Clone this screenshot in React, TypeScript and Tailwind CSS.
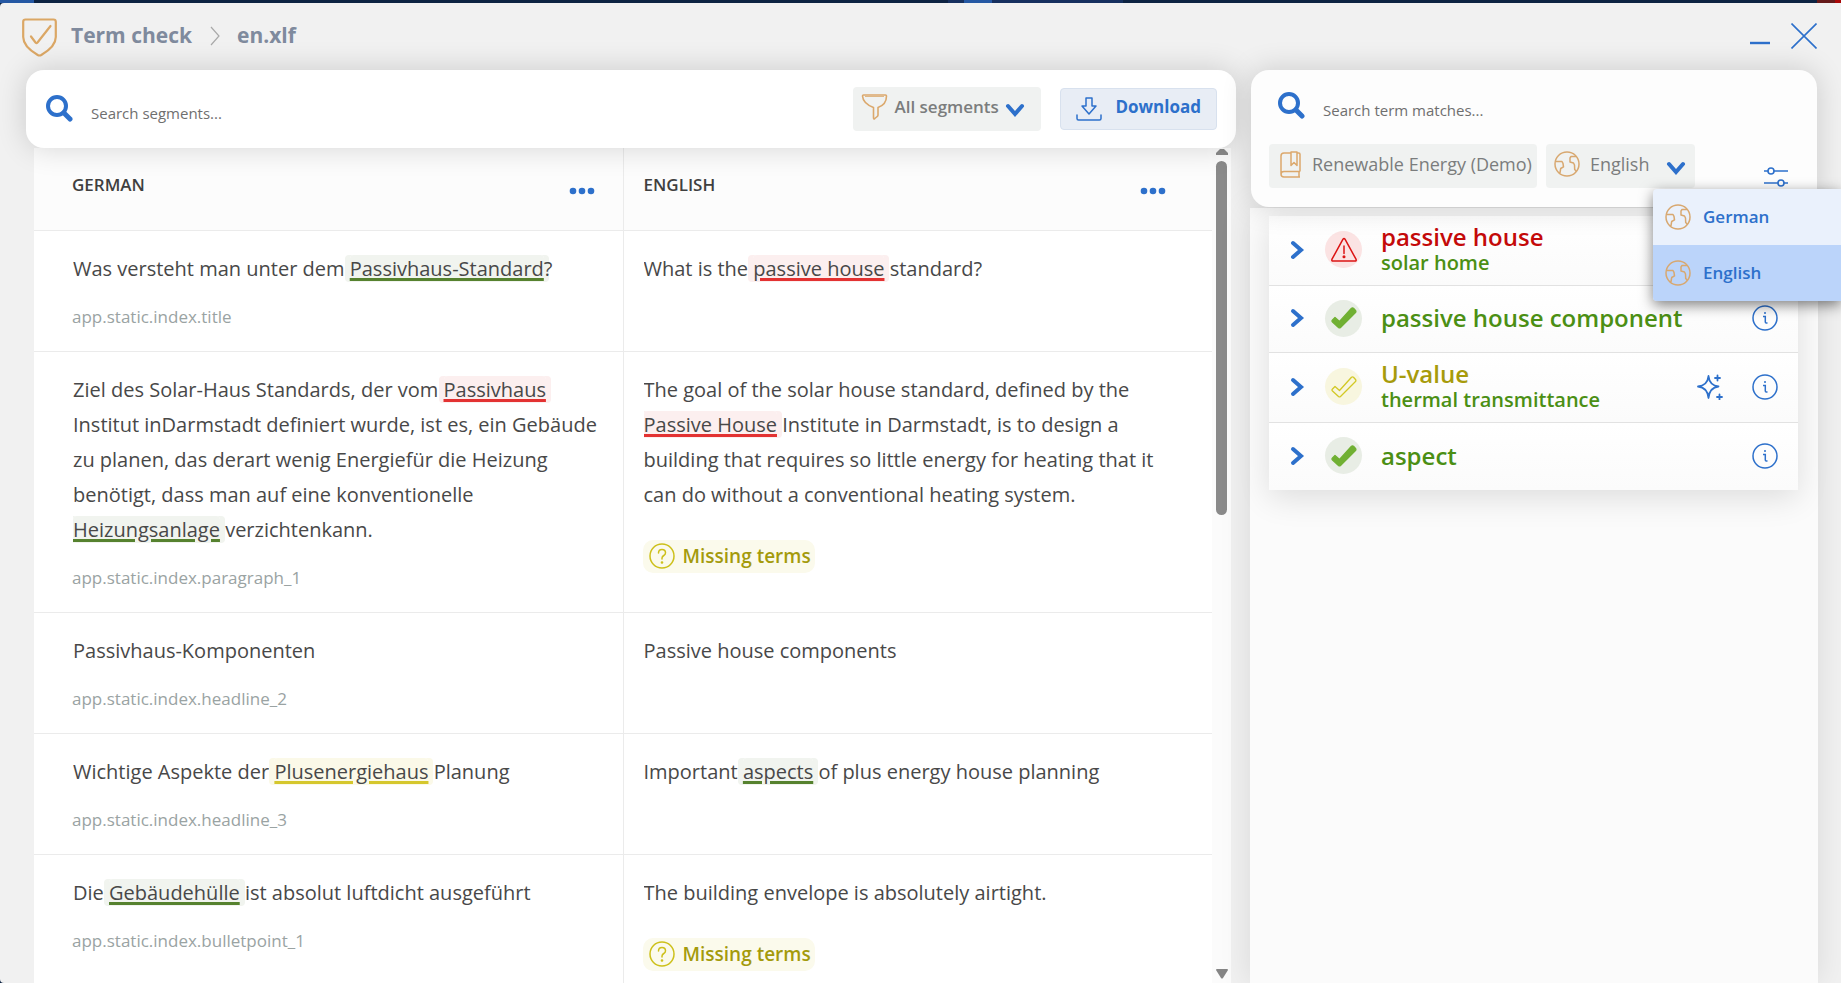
import { useState } from "react";
import type { ReactNode } from "react";

type Tone = "green" | "red" | "yellow";

type Segment = {
  id: string;
  german: ReactNode;
  english: ReactNode;
  missing?: boolean;
};

type TermMatch = {
  term: string;
  replacement?: string;
  tone: Tone;
  ai?: boolean;
};

const markTones: Record<Tone, string> = {
  green: "bg-[#f1f4ef] decoration-[#56822f] shadow-[-5px_0_0_#f1f4ef,5px_0_0_#f1f4ef]",
  red: "bg-[#fcefef] decoration-[#e33232] shadow-[-5px_0_0_#fcefef,5px_0_0_#fcefef]",
  yellow: "bg-[#fbf9e8] decoration-[#d5c72d] shadow-[-5px_0_0_#fbf9e8,5px_0_0_#fbf9e8]",
};

const termTones: Record<Tone, string> = {
  green: "text-[#4b8f14]",
  red: "text-[#c40a0a]",
  yellow: "text-[#a79b0b]",
};

const circleTones: Record<Tone, string> = {
  green: "bg-[#e8ede5]",
  red: "bg-[#fbe3e3]",
  yellow: "bg-[#f8f6df]",
};

function Term({ tone, children }: { tone: Tone; children: ReactNode }) {
  return (
    <mark className={`rounded text-inherit underline decoration-[3px] underline-offset-2 ${markTones[tone]}`}>
      {children}
    </mark>
  );
}

const segments: Segment[] = [
  {
    id: "app.static.index.title",
    german: <>Was versteht man unter dem <Term tone="green">Passivhaus-Standard</Term>?</>,
    english: <>What is the <Term tone="red">passive house</Term> standard?</>,
  },
  {
    id: "app.static.index.paragraph_1",
    german: (
      <>
        Ziel des Solar-Haus Standards, der vom <Term tone="red">Passivhaus</Term> Institut inDarmstadt definiert wurde,
        ist es, ein Gebäude zu planen, das derart wenig Energiefür die Heizung benötigt, dass man auf eine
        konventionelle <Term tone="green">Heizungsanlage</Term> verzichtenkann.
      </>
    ),
    english: (
      <>
        The goal of the solar house standard, defined by the <Term tone="red">Passive House</Term> Institute in
        Darmstadt, is to design a building that requires so little energy for heating that it can do without a
        conventional heating system.
      </>
    ),
    missing: true,
  },
  {
    id: "app.static.index.headline_2",
    german: "Passivhaus-Komponenten",
    english: "Passive house components",
  },
  {
    id: "app.static.index.headline_3",
    german: <>Wichtige Aspekte der <Term tone="yellow">Plusenergiehaus</Term> Planung</>,
    english: <>Important <Term tone="green">aspects</Term> of plus energy house planning</>,
  },
  {
    id: "app.static.index.bulletpoint_1",
    german: <>Die <Term tone="green">Gebäudehülle</Term> ist absolut luftdicht ausgeführt</>,
    english: "The building envelope is absolutely airtight.",
    missing: true,
  },
];

const matches: TermMatch[] = [
  { term: "passive house", replacement: "solar home", tone: "red" },
  { term: "passive house component", tone: "green" },
  { term: "U-value", replacement: "thermal transmittance", tone: "yellow", ai: true },
  { term: "aspect", tone: "green" },
];

function SearchIcon() {
  return (
    <svg className="mb-0.5 size-7 shrink-0 text-[#2d70cb]" viewBox="0 0 28 28" fill="none" stroke="currentColor">
      <circle cx="12" cy="12" r="9" strokeWidth="4" />
      <path d="M19 19l6 6" strokeWidth="5" strokeLinecap="round" />
    </svg>
  );
}

function Chevron({ className }: { className?: string }) {
  return (
    <svg className={className} width="20" height="14" viewBox="0 0 20 14" fill="none" stroke="#2d70cb" strokeWidth="4" strokeLinecap="round">
      <path d="M3 3l7 8 7-8" />
    </svg>
  );
}

function GlobeIcon() {
  return (
    <svg className="size-[26px] shrink-0" viewBox="0 0 26 26" fill="none" stroke="#d8a870" strokeWidth="1.5" strokeLinejoin="round">
      <circle cx="13" cy="13" r="12" />
      <path d="M1.500 10.500h6.500l1 1.800.5 3.500-2.800 1.700-.7 4-1 1" />
      <path d="M22 5.500h-5l-1 1.500v4l3.500 1 1 2 .2 4.500 1.800 2" />
    </svg>
  );
}

function InfoIcon() {
  return (
    <svg width="26" height="26" viewBox="0 0 26 26" fill="none" stroke="#2d70cb" strokeWidth="1.500">
      <circle cx="13" cy="13" r="12" />
      <path d="M11 11.500h2.300v5.500q0 1 1 1h1.200" />
      <circle cx="13" cy="8" r="1" fill="#2d70cb" stroke="none" />
    </svg>
  );
}

function SparkleIcon() {
  return (
    <svg width="26" height="26" viewBox="0 0 26 26" fill="none" stroke="#2d70cb" strokeWidth="1.800" strokeLinejoin="round" strokeLinecap="round">
      <path d="M11.500 2q1 9.500 10 10.500-9 1-10 11.500-1-10.500-10.500-11.500Q10.500 11.500 11.500 2Z" />
      <path d="M20.500 1.500v5M18 4h5M22.500 20.500v5M20 23h5" />
    </svg>
  );
}

function StatusIcon({ tone }: { tone: Tone }) {
  return (
    <span className={`flex size-[37px] shrink-0 items-center justify-center rounded-full ${circleTones[tone]}`}>
      {tone === "red" ? (
        <svg width="26" height="26" viewBox="0 0 26 26" fill="none" stroke="#dc1414" strokeWidth="1.500" strokeLinejoin="round" strokeLinecap="round">
          <path d="M12 2.200q1-1.400 2 0l11 20q.7 1.800-1 1.800H2q-1.700 0-1-1.800Z" />
          <path d="M13 9v7.500" />
          <circle cx="13" cy="19.800" r=".8" fill="#dc1414" />
        </svg>
      ) : (
        <svg
          width="26"
          height="26"
          viewBox="0 0 26 26"
          fill={tone === "green" ? "#70b033" : "none"}
          stroke={tone === "green" ? "#70b033" : "#d2c824"}
          strokeWidth="1.300"
          strokeLinejoin="round"
        >
          <path d="M4 12.500l4.500 4L20.500 3.300q1-.9 2 0l2 2.200q.8 1 0 2L9.500 22.500q-1 .8-2 0l-6-5.500q-1-1 0-2Z" />
        </svg>
      )}
    </span>
  );
}

function MissingTerms() {
  return (
    <div className="mt-7 -ml-px inline-flex h-[33px] items-center gap-2 rounded-[10px] bg-[#fbfaec] pr-1 pl-1.5 text-[19px] font-semibold text-[#a49a0c]">
      <svg width="26" height="26" viewBox="0 0 26 26" fill="none" stroke="#cdc01a" strokeWidth="1.500" strokeLinecap="round">
        <circle cx="13" cy="13" r="12" />
        <path d="M9.500 10q0-3.500 3.500-3.500t3.500 3.300q0 1.700-1.700 2.700T13 15v1" />
        <circle cx="13" cy="19.500" r=".6" fill="#cdc01a" />
      </svg>
      Missing terms
    </div>
  );
}

function Header() {
  return (
    <header className="flex h-[67px] shrink-0 items-center pr-6 pb-0.5 pl-[22px] text-[21px] font-bold text-[#7f8a9d]">
      <svg className="mt-1 mr-3.5" width="35" height="39" viewBox="0 0 35 39" fill="none" stroke="#dba765" strokeWidth="2.200" strokeLinejoin="round" strokeLinecap="round">
        <path d="M3.500 1.500h28q2.300 0 2.300 2.300V19q0 9.500-14.500 18-1.800 1-3.600 0Q1.200 28.500 1.200 19V3.800q0-2.300 2.300-2.300Z" />
        <path d="M9 18.500l4.500 6q1 1 2 0L28.500 8" />
      </svg>
      <h1>Term check</h1>
      <svg className="mr-4 ml-[17px]" width="12" height="20" viewBox="0 0 12 20" fill="none" stroke="#a9a9a9" strokeWidth="1.200">
        <path d="M2 1l8 9-8 9" />
      </svg>
      <span className="flex-1">en.xlf</span>
      <button type="button" aria-label="Minimize" className="mt-3.5 mr-5">
        <svg width="22" height="4" viewBox="0 0 22 4">
          <path d="M1 2h20" stroke="#2d70cb" strokeWidth="2.400" />
        </svg>
      </button>
      <button type="button" aria-label="Close">
        <svg width="26" height="26" viewBox="0 0 26 26" stroke="#2d70cb" strokeWidth="1.600">
          <path d="M.5.5l25 25M25.500.5l-25 25" />
        </svg>
      </button>
    </header>
  );
}

function SegmentSearch() {
  return (
    <div className="relative z-10 flex h-[78px] shrink-0 items-center rounded-[18px] bg-white px-[19px] shadow-[0_0_30px_rgba(0,0,0,0.16)]">
      <SearchIcon />
      <input
        aria-label="Search segments"
        placeholder="Search segments..."
        className="mt-2 ml-[18px] min-w-0 flex-1 bg-transparent text-[15px] outline-none placeholder:text-[#6f6f6f]"
      />
      <label className="flex h-11 items-center rounded bg-[#f0f2f1] pr-4 pb-1 pl-2 text-[17px] text-[#7b7d7d]">
        <svg className="mr-1.5" width="27" height="26" viewBox="0 0 27 26" fill="none" stroke="#dba86c" strokeWidth="1.600" strokeLinejoin="round">
          <path d="M2.500 1h22q1 0 1 1 0 8.500-8.500 11.500V21q0 1-.8 1.500l-2.400 2q-1.300 1-1.300-1v-10Q2 9.500 1.500 2q0-1 1-1Z" />
          <path d="M4 2.500h19" strokeWidth=".8" />
        </svg>
        <select className="mr-1.5 appearance-none bg-transparent font-semibold outline-none" aria-label="Segment filter">
          <option>All segments</option>
        </select>
        <Chevron className="mt-1.5" />
      </label>
      <button
        type="button"
        className="ml-[19px] flex h-[42px] items-center rounded border border-[#d8e1ee] bg-[#e8edf5] px-[15px] text-[17px] font-bold text-[#2d70cb]"
      >
        <svg className="mr-[13px]" width="26" height="24" viewBox="0 0 26 24" fill="none" stroke="#2d70cb" strokeWidth="1.500" strokeLinejoin="round" strokeLinecap="round">
          <path d="M10 1h6v8h4l-7 8-7-8h4Z" />
          <path d="M1 18v3.500Q1 23 2.500 23h21q1.500 0 1.500-1.500V18" />
        </svg>
        <span className="pb-1">Download</span>
      </button>
    </div>
  );
}

function MoreButton({ label }: { label: string }) {
  return (
    <button type="button" aria-label={label} className="mt-3">
      <svg width="26" height="8" viewBox="0 0 26 8" fill="#2d70cb">
        <circle cx="4" cy="4" r="3.300" />
        <circle cx="13" cy="4" r="3.300" />
        <circle cx="22" cy="4" r="3.300" />
      </svg>
    </button>
  );
}

function SegmentTable() {
  return (
    <table className="w-full table-fixed border-collapse self-start bg-white text-xl leading-[35px] text-[#484848]">
      <thead className="bg-[#fcfcfc] text-[17px] text-[#3f3f3f]">
        <tr className="border-b border-[#ebebeb]">
          {["GERMAN", "ENGLISH"].map((lang) => (
            <th
              key={lang}
              className="h-[82px] border-l border-[#ebebeb] pr-[46px] pl-5 font-semibold first:border-l-0 first:pr-7 first:pl-[38px]"
            >
              <div className="-mt-2 flex items-center justify-between">
                {lang}
                <MoreButton label={`${lang} column options`} />
              </div>
            </th>
          ))}
        </tr>
      </thead>
      <tbody>
        {segments.map((segment) => (
          <tr key={segment.id} className="border-b border-[#ebebeb] align-top">
            <td className="pt-5 pr-5 pb-[22px] pl-[39px]">
              <p className="overflow-hidden">{segment.german}</p>
              <p className="mt-[19px] -ml-px text-[17px] leading-6 text-[#9aa3a3]">{segment.id}</p>
            </td>
            <td className="border-l border-[#ebebeb] pt-5 pr-10 pb-7 pl-5">
              <p className="overflow-hidden">{segment.english}</p>
              {segment.missing && <MissingTerms />}
            </td>
          </tr>
        ))}
      </tbody>
    </table>
  );
}

function ScrollTrack() {
  return (
    <div className="flex w-[19px] shrink-0 flex-col items-center bg-[#fbfbfb] pt-px pb-1">
      <svg width="12" height="6" viewBox="0 0 12 6" fill="#8a8a8a">
        <path d="M4 0h4l4 4v2H0V4Z" />
      </svg>
      <div className="mt-[6px] h-[354px] w-[11px] rounded-full bg-[#8a8a8a]" />
      <svg className="mt-auto" width="12" height="10" viewBox="0 0 12 10" fill="#858585">
        <path d="M1 0h10q1 0 1 1L7 9q-1 1-2 0L0 1q0-1 1-1Z" />
      </svg>
    </div>
  );
}

function TermSearch() {
  const [open, setOpen] = useState(true);
  const [language, setLanguage] = useState("English");

  return (
    <div className="relative z-10 h-[137px] shrink-0 rounded-[18px] bg-[#fdfdfd] px-[18px] pt-[22px] shadow-[0_0_30px_rgba(0,0,0,0.16)]">
      <div className="flex h-7 items-center pl-2">
        <SearchIcon />
        <input
          aria-label="Search term matches"
          placeholder="Search term matches..."
          className="mt-2 ml-[18px] min-w-0 flex-1 bg-transparent text-[15px] outline-none placeholder:text-[#6f6f6f]"
        />
      </div>
      <div className="mt-6 flex items-center text-lg text-[#7b7d7d]">
        <button type="button" className="flex h-11 items-center rounded bg-[#f0f2f1] pr-[5px] pb-1 pl-[11px]">
          <svg className="mr-[11px]" width="21" height="27" viewBox="0 0 21 27" fill="none" stroke="#dba86c" strokeWidth="1.500" strokeLinejoin="round">
            <path d="M20 20.500V3.200Q20 2 18.800 2H4Q1 2 1 5v18q0 3 3 3h16M20 20.500H4q-3 0-3 2.700M19 20.500V26" />
            <path d="M11 1h6v13.500l-3-3-3 3Z" fill="#f0f2f1" />
          </svg>
          Renewable Energy (Demo)
        </button>
        <button
          type="button"
          aria-haspopup="listbox"
          aria-expanded={open}
          onClick={() => setOpen(!open)}
          className="ml-[9px] flex h-11 items-center rounded bg-[#f0f2f1] pr-[9px] pb-1 pl-2"
        >
          <GlobeIcon />
          <span className="ml-2.5">{language}</span>
          <Chevron className="mt-2 ml-[17px]" />
        </button>
        <button type="button" aria-label="Filter settings" className="mt-[22px] mr-[10px] ml-auto">
          <svg width="26" height="20" viewBox="0 0 26 20" fill="none" stroke="#2d70cb" strokeWidth="1.600">
            <path d="M1 4h4M11 4h14M1 16h14M21 16h4" />
            <circle cx="8" cy="4" r="3" />
            <circle cx="18" cy="16" r="3" />
          </svg>
        </button>
      </div>
      {open && (
        <ul
          role="listbox"
          aria-label="Language"
          className="absolute top-[119px] -right-6 w-[188px] overflow-hidden rounded-l bg-[#eaf1fc] text-[17px] font-semibold text-[#2d70cb] shadow-[0_4px_14px_rgba(0,0,0,0.5)]"
        >
          {["German", "English"].map((name) => (
            <li key={name} role="option" aria-selected={name === language}>
              <button
                type="button"
                onClick={() => setLanguage(name)}
                className={`flex h-14 w-full items-center gap-3 pl-3 ${name === language ? "bg-[#bbd4fa]" : ""}`}
              >
                <GlobeIcon />
                {name}
              </button>
            </li>
          ))}
        </ul>
      )}
    </div>
  );
}

function TermList() {
  return (
    <ul className="mt-2 mr-5 ml-[19px] shadow-[0_8px_30px_rgba(0,0,0,0.12)]">
      {matches.map((match) => (
        <li
          key={match.term}
          className="flex min-h-[67px] items-center border-b border-[#e2e2e2] bg-linear-to-b from-white to-[#fbfbfb] pr-5 pb-0.5 pl-[21px] last:border-b-0"
        >
          <button type="button" aria-label={`Expand ${match.term}`} className="mr-5">
            <svg width="15" height="20" viewBox="0 0 15 20" fill="none" stroke="#2d70cb" strokeWidth="4" strokeLinecap="round">
              <path d="M3 3l8 7-8 7" />
            </svg>
          </button>
          <StatusIcon tone={match.tone} />
          <div className={`ml-[19px] flex-1 font-semibold ${match.replacement ? "pt-[7px] pb-2" : ""}`}>
            <div className={`text-2xl leading-7 ${termTones[match.tone]}`}>{match.term}</div>
            {match.replacement && <div className="text-xl leading-6 text-[#4b8f14]">{match.replacement}</div>}
          </div>
          {match.ai && (
            <button type="button" aria-label="AI suggestion" className="mr-[29px]">
              <SparkleIcon />
            </button>
          )}
          <button type="button" aria-label={`About ${match.term}`}>
            <InfoIcon />
          </button>
        </li>
      ))}
    </ul>
  );
}

export default function App() {
  return (
    <div className="flex h-screen flex-col overflow-hidden bg-[#0d2342] font-['Open_Sans','Noto_Sans',sans-serif]">
      {/* Sliver of the host page above the window */}
      <div className="flex h-[3px] shrink-0">
        <div className="w-[34px] bg-[#2558a3]" />
        <div className="flex-1" />
        <div className="w-[175px] bg-[#16305f] px-4">
          <div className="h-full w-[28px] bg-[#2558a3]" />
        </div>
        <div className="w-[694px]" />
        <div className="w-[18px] bg-[#651a1a]" />
        <div className="w-[6px] bg-[#a80808]" />
      </div>
      <div className="flex min-h-0 flex-1 flex-col rounded-l bg-[#f1f1f1]">
        <Header />
        <main className="flex min-h-0 flex-1 gap-[15px] pr-6 pl-[26px]">
          <section className="flex min-w-0 flex-1 flex-col">
            <SegmentSearch />
            <div className="mr-[5px] ml-2 flex min-h-0 flex-1 overflow-hidden">
              <SegmentTable />
              <ScrollTrack />
            </div>
          </section>
          <section className="flex w-[566px] shrink-0 flex-col">
            <TermSearch />
            <div className="-mx-px mt-px flex-1 bg-[#fbfbfb] shadow-[0_0_30px_rgba(0,0,0,0.1)]">
              <TermList />
            </div>
          </section>
        </main>
      </div>
    </div>
  );
}
